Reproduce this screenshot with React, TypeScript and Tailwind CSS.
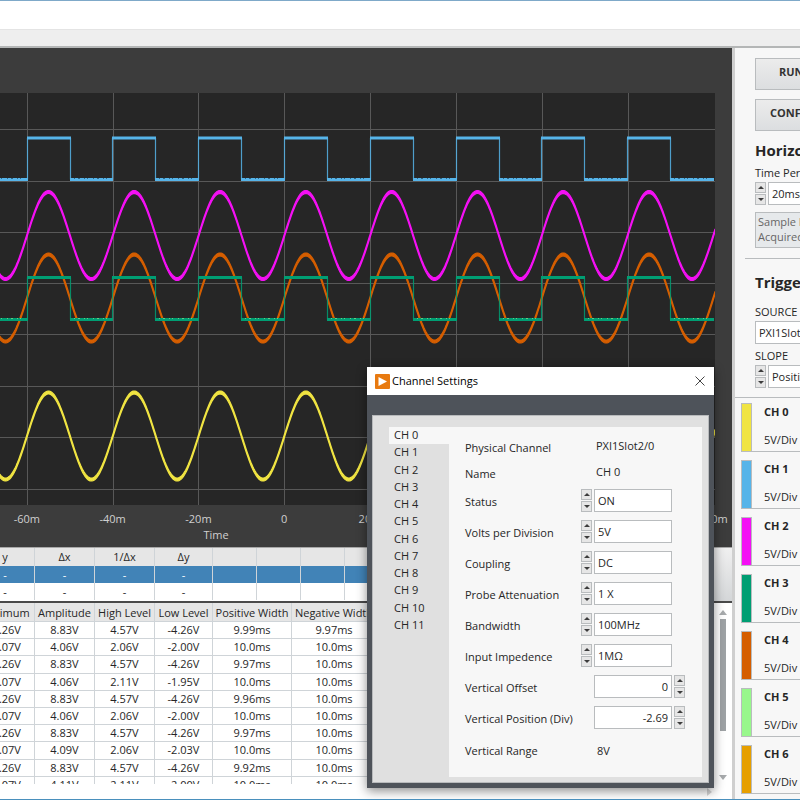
import React, { useState } from "react";

const COLORS = {
  yellow: "#f0e442",
  blue: "#56b4e9",
  magenta: "#f410f4",
  green: "#009e73",
  orange: "#d55e00",
};

const PERIOD = 85.8;
const START = 27;
const PLOT_W = 715;
const PLOT_H = 412;

const gridX = [27, 113, 198, 284, 370, 456, 542, 628];
const gridY = [36, 88, 139, 190, 241, 293, 344, 396];
const ticks = ["-60m", "-40m", "-20m", "0", "20m", "40m", "60m", "80m", "100m"];

// sine drawn as a band, so the crests come out thicker than the slopes
const sineBand = (mid: number, amp: number) => {
  const top: string[] = [];
  const bottom: string[] = [];
  for (let x = -2; x <= PLOT_W; x += 1) {
    const y = mid - amp * Math.sin((2 * Math.PI * (x - START)) / PERIOD);
    top.push(`${x},${(y - 1.5).toFixed(1)}`);
    bottom.unshift(`${x},${(y + 1.5).toFixed(1)}`);
  }
  return [...top, ...bottom].join(" ");
};

const Sine = ({ mid, color }: { mid: number; color: string }) => (
  <polygon
    points={sineBand(mid, 43.5)}
    fill={color}
    stroke={color}
    strokeWidth="1.2"
  />
);

const cycles = [-1, 0, 1, 2, 3, 4, 5, 6, 7];

const Square = ({
  high,
  low,
  color,
  noise,
}: {
  high: number;
  low: number;
  color: string;
  noise: string;
}) => (
  <g fill="none" stroke={color}>
    {cycles.map((i) => {
      const x = Math.floor(START + i * PERIOD);
      const mid = x + 43;
      const end = Math.floor(START + (i + 1) * PERIOD);
      return (
        <g key={i}>
          <path
            d={`M${x + 0.5} ${low}V${high}M${mid + 0.5} ${high}V${low}`}
            strokeWidth="1.2"
            opacity="0.85"
          />
          <path
            d={`M${x} ${high}H${mid + 1}M${mid} ${low}H${end + 1}`}
            strokeWidth="2.8"
          />
          <path
            d={`M${mid + 4} ${low - 1}H${end - 3}`}
            stroke={noise}
            strokeWidth="1"
            strokeDasharray="1 3 2 4 1 2 1 5"
            opacity="0.7"
          />
        </g>
      );
    })}
  </g>
);

const Scope = () => (
  <section className="bg-[#3c3c3c] pt-[45px] text-[#d0d0d0]">
    <div className="mr-[17px] bg-[#262626]">
      <svg
        className="block h-[412px] w-full"
        viewBox={`0 0 ${PLOT_W} ${PLOT_H}`}
        preserveAspectRatio="none"
      >
        <g fill="#585858">
          {gridX.map((x) => (
            <rect key={x} x={x} y="0" width="1" height={PLOT_H} />
          ))}
          {gridY.map((y) => (
            <rect key={y} x="0" y={y} width={PLOT_W} height="1" />
          ))}
        </g>
        <Sine mid={343} color={COLORS.yellow} />
        <Square high={45} low={86.5} color={COLORS.blue} noise="#1f4660" />
        <Sine mid={142.5} color={COLORS.magenta} />
        <Sine mid={205} color={COLORS.orange} />
        <Square
          high={184.5}
          low={226.5}
          color={COLORS.green}
          noise="#8fe08a"
        />
      </svg>
    </div>
    <div className="-ml-4 -mr-6 grid grid-cols-9 pt-[6px] text-center leading-4">
      {ticks.map((t) => (
        <span key={t}>{t}</span>
      ))}
    </div>
    <p className="mr-[300px] h-5 text-center leading-4">Time</p>
  </section>
);

const CursorTable = () => {
  const blanks = [0, 1, 2, 3, 4, 5, 6, 7, 8, 9, 10, 11];
  const cell = "border-r border-[#cfd4d8] p-0 text-center font-normal";
  return (
    <div className="flex h-[54px] border-t border-[#a8a8a8] bg-white">
      <div className="min-w-0 flex-1 overflow-hidden">
        <table className="-ml-6 w-[765px] table-fixed border-separate border-spacing-0 leading-4">
          <colgroup>
            <col className="w-[59px]" />
            <col className="w-[60px]" />
            <col className="w-[60px]" />
            <col className="w-[58px]" />
          </colgroup>
          <thead>
            <tr className="h-[18px] bg-[#e6e6e6]">
              {["y", "Δx", "1/Δx", "Δy"].map((h) => (
                <th key={h} className={cell}>
                  {h}
                </th>
              ))}
              {blanks.map((b) => (
                <th key={b} className={cell}></th>
              ))}
            </tr>
          </thead>
          <tbody>
            {["bg-[#4183b7] text-white", "bg-white"].map((tone) => (
              <tr key={tone} className={`h-[17px] ${tone}`}>
                {[0, 1, 2, 3].map((c) => (
                  <td key={c} className={cell}>
                    -
                  </td>
                ))}
                {blanks.map((b) => (
                  <td key={b} className={cell}></td>
                ))}
              </tr>
            ))}
          </tbody>
        </table>
      </div>
      <div className="w-5 bg-linear-to-b from-[#f0f0f0] to-[#d4d6d8]"></div>
    </div>
  );
};

const headers = [
  "Minimum",
  "Amplitude",
  "High Level",
  "Low Level",
  "Positive Width",
  "Negative Width",
];

const measurements = [
  ["-4.26V", "8.83V", "4.57V", "-4.26V", "9.99ms", "9.97ms"],
  ["-2.07V", "4.06V", "2.06V", "-2.00V", "10.0ms", "10.0ms"],
  ["-4.26V", "8.83V", "4.57V", "-4.26V", "9.97ms", "10.0ms"],
  ["-2.07V", "4.06V", "2.11V", "-1.95V", "10.0ms", "10.0ms"],
  ["-4.26V", "8.83V", "4.57V", "-4.26V", "9.96ms", "10.0ms"],
  ["-2.07V", "4.06V", "2.06V", "-2.00V", "10.0ms", "10.0ms"],
  ["-4.26V", "8.83V", "4.57V", "-4.26V", "9.97ms", "10.0ms"],
  ["-2.07V", "4.09V", "2.06V", "-2.03V", "10.0ms", "10.0ms"],
  ["-4.26V", "8.83V", "4.57V", "-4.26V", "9.92ms", "10.0ms"],
  ["-2.07V", "4.11V", "2.11V", "-2.00V", "10.0ms", "10.0ms"],
];

const MeasurementTable = () => {
  const cell =
    "border-r border-b border-[#cfd4d8] p-0 text-center font-normal whitespace-nowrap";
  return (
    <div className="flex h-[183px] border-t-2 border-[#4a4a4a] bg-white">
      <div className="min-w-0 flex-1 overflow-hidden">
        <table className="-ml-6 h-[191px] w-[740px] table-fixed border-separate border-spacing-0 leading-4">
          <colgroup>
            <col className="w-[59px]" />
            <col className="w-[60px]" />
            <col className="w-[60px]" />
            <col className="w-[58px]" />
            <col className="w-[79px]" />
            <col className="w-[85px]" />
          </colgroup>
          <thead>
            <tr className="h-[19px] bg-[#e6e6e6]">
              {headers.map((h) => (
                <th key={h} className={`${cell} pt-px`}>
                  {h}
                </th>
              ))}
              <th className={cell}></th>
            </tr>
          </thead>
          <tbody>
            {measurements.map((row, i) => (
              <tr key={i}>
                {row.map((v, j) => (
                  <td key={j} className={cell}>
                    {v}
                  </td>
                ))}
                <td className={cell}></td>
              </tr>
            ))}
          </tbody>
        </table>
      </div>
      <div className="flex w-[19px] flex-col items-center justify-between pt-[7px] pb-1">
        <svg width="8" height="5" viewBox="0 0 8 5" fill="#a8abad">
          <path d="M4 0L8 5H0Z" />
        </svg>
        <div className="mt-1 mb-auto h-28 w-[6px] bg-[#9fa3a6]"></div>
        <svg width="8" height="5" viewBox="0 0 8 5" fill="#a8abad">
          <path d="M0 0H8L4 5Z" />
        </svg>
      </div>
    </div>
  );
};

const Spinner = ({ label }: { label: string }) => (
  <div className="flex shrink-0 flex-col gap-px">
    <button
      type="button"
      aria-label={`${label} up`}
      className="flex h-[11px] w-[11px] items-center justify-center border border-[#b9bcbe] bg-[#e6e6e6]"
    >
      <svg width="6" height="3" viewBox="0 0 6 3" fill="#3c3c3c">
        <path d="M3 0L6 3H0Z" />
      </svg>
    </button>
    <button
      type="button"
      aria-label={`${label} down`}
      className="flex h-[11px] w-[11px] items-center justify-center border border-[#b9bcbe] bg-[#e6e6e6]"
    >
      <svg width="6" height="3" viewBox="0 0 6 3" fill="#3c3c3c">
        <path d="M0 0H6L3 3Z" />
      </svg>
    </button>
  </div>
);

const fields = [
  { id: "status", label: "Status", value: "ON" },
  { id: "volts", label: "Volts per Division", value: "5V" },
  { id: "coupling", label: "Coupling", value: "DC" },
  { id: "probe", label: "Probe Attenuation", value: "1 X" },
  { id: "bandwidth", label: "Bandwidth", value: "100MHz" },
  { id: "impedance", label: "Input Impedence", value: "1MΩ" },
  { id: "offset", label: "Vertical Offset", value: "0", numeric: true },
  {
    id: "position",
    label: "Vertical Position (Div)",
    value: "-2.69",
    numeric: true,
  },
];

const channelTabs = Array.from({ length: 12 }, (_, i) => `CH ${i}`);

const ChannelDialog = () => {
  const [active, setActive] = useState(0);
  return (
    <div
      role="dialog"
      aria-label="Channel Settings"
      className="absolute top-[366px] left-[367px] w-[347px] bg-[#4e535a] pb-[5px] shadow-[0_3px_10px_rgba(0,0,0,0.45)]"
    >
      <div className="flex h-[28px] items-center bg-white pr-[9px] pl-2 text-black">
        <svg width="15" height="15" viewBox="0 0 15 15">
          <rect width="15" height="15" rx="1" fill="#e87a10" />
          <path d="M3.5 3L12 7.5L3.5 12Z" fill="#fff" />
        </svg>
        <span className="ml-[2px]">Channel Settings</span>
        <button type="button" aria-label="Close" className="ml-auto">
          <svg
            width="10"
            height="10"
            viewBox="0 0 10 10"
            fill="none"
            stroke="#444"
          >
            <path d="M0.5 0.5L9.5 9.5M9.5 0.5L0.5 9.5" />
          </svg>
        </button>
      </div>
      <div className="mx-[5px] mt-5 flex border border-[#b8babc] bg-[#e0e0e0] pt-[11px] pr-[6px] pb-[5px] pl-4">
        <div role="tablist" className="grid h-[207px] w-[60px] grid-rows-12">
          {channelTabs.map((name, i) => (
            <button
              key={name}
              type="button"
              role="tab"
              aria-selected={active === i}
              onClick={() => setActive(i)}
              className={`pb-[2px] pl-[5px] text-left leading-[15px] ${
                active === i ? "bg-[#f7f7f7]" : ""
              }`}
            >
              {name}
            </button>
          ))}
        </div>
        <div className="flex-1 bg-[#f7f7f7] pt-[6px] pb-[8px] pl-4">
          <div className="flex h-[26px] items-center">
            <span className="w-[131px] pt-1">Physical Channel</span>
            <span>PXI1Slot2/0</span>
          </div>
          <div className="flex h-[26px] items-center">
            <span className="w-[131px] pt-1">Name</span>
            <span>CH {active}</span>
          </div>
          {fields.map(({ id, label, value, numeric }) => (
            <div key={id} className="flex h-[31px] items-center gap-[2px]">
              <label
                htmlFor={id}
                className={`pt-1 ${numeric ? "w-[127px]" : "w-[114px]"}`}
              >
                {label}
              </label>
              {!numeric && <Spinner label={label} />}
              <input
                id={id}
                defaultValue={value}
                className={`h-[23px] w-[78px] border border-[#b9bcbe] bg-white px-[3px] ${
                  numeric ? "text-right" : ""
                }`}
              />
              {numeric && <Spinner label={label} />}
            </div>
          ))}
          <div className="flex h-9 items-center">
            <span className="w-[132px]">Vertical Range</span>
            <span>8V</span>
          </div>
        </div>
      </div>
    </div>
  );
};

const channels = [
  { name: "CH 0", tone: "bg-[#f0e442]" },
  { name: "CH 1", tone: "bg-[#56b4e9]" },
  { name: "CH 2", tone: "bg-[#f410f4]" },
  { name: "CH 3", tone: "bg-[#009e73]" },
  { name: "CH 4", tone: "bg-[#d55e00]" },
  { name: "CH 5", tone: "bg-[#98f78c]" },
  { name: "CH 6", tone: "bg-[#e69f00]" },
];

const Sidebar = () => {
  const button =
    "block h-8 w-full border border-[#b9bcbe] bg-linear-to-b from-[#ececec] to-[#dcdee0] pb-[3px] text-left font-bold text-[#333]";
  const box = "h-[23px] w-full border border-[#b9bcbe] bg-white px-[3px]";
  return (
    <aside className="w-[68px] shrink-0 overflow-hidden border-l-[3px] border-[#cfcfcf] bg-[#f7f7f7]">
      <div className="w-40">
        <div className="pt-[10px] pl-5">
          <button type="button" className={`${button} pl-[23px]`}>
            RUN
          </button>
          <button type="button" className={`${button} mt-[9px] pl-[14px]`}>
            CONFIG
          </button>
          <h2 className="mt-[9px] text-[15px] leading-5 font-bold">
            Horizontal
          </h2>
          <label htmlFor="time" className="mt-[5px] block leading-4">
            Time Per Division
          </label>
          <div className="mt-px flex items-center gap-[2px]">
            <Spinner label="Time Per Division" />
            <input id="time" defaultValue="20ms" className={box} />
          </div>
          <div className="mt-[7px] border border-[#b9bcbe] bg-[#e6e9eb] px-[2px] pt-px pb-[3px] leading-[15px] text-[#666]">
            <p>Sample Rate</p>
            <p>Acquired</p>
          </div>
        </div>
        <hr className="mt-[10px] ml-[10px] border-[#b9bcbe]" />
        <div className="pt-[13px] pl-5">
          <h2 className="text-[15px] leading-5 font-bold">Trigger</h2>
          <label htmlFor="source" className="mt-3 block leading-4">
            SOURCE
          </label>
          <input
            id="source"
            defaultValue="PXI1Slot2/0"
            className={`${box} mt-px block`}
          />
          <label htmlFor="slope" className="mt-1 block leading-4">
            SLOPE
          </label>
          <div className="mt-px flex items-center gap-[2px]">
            <Spinner label="Slope" />
            <input id="slope" defaultValue="Positive" className={box} />
          </div>
        </div>
        <hr className="mt-[9px] border-[#b9bcbe]" />
        <ul className="pt-[5px] pl-[6px]">
          {channels.map(({ name, tone }) => (
            <li key={name} className="mb-2 flex h-[49px]">
              <span
                className={`w-[11px] border border-[#b9bcbe] ${tone}`}
              ></span>
              <div className="flex-1 border-b border-[#b9bcbe] pl-3 leading-4">
                <p className="pt-px font-bold">{name}</p>
                <p className="pt-3">5V/Div</p>
              </div>
            </li>
          ))}
        </ul>
      </div>
    </aside>
  );
};

const App = () => {
  return (
    <div className="relative flex h-screen flex-col overflow-hidden border-t border-b border-t-[#7fa9c9] border-b-[#4a90bd] bg-white font-['Open_Sans','Noto_Sans',sans-serif] text-[11px] text-[#262626]">
      <div className="h-7 shrink-0"></div>
      <div className="h-[19px] shrink-0 border-t border-b-2 border-t-[#e4e4e4] border-b-[#b4b6b6] bg-[#eee]"></div>
      <div className="flex min-h-0 flex-1">
        <main className="min-w-0 flex-1">
          <Scope />
          <CursorTable />
          <MeasurementTable />
          <div className="flex justify-end pt-1 pr-5">
            <svg width="5" height="8" viewBox="0 0 5 8" fill="#d4d4d4">
              <path d="M0 0L5 4L0 8Z" />
            </svg>
          </div>
        </main>
        <Sidebar />
      </div>
      <ChannelDialog />
    </div>
  );
};

export default App;
